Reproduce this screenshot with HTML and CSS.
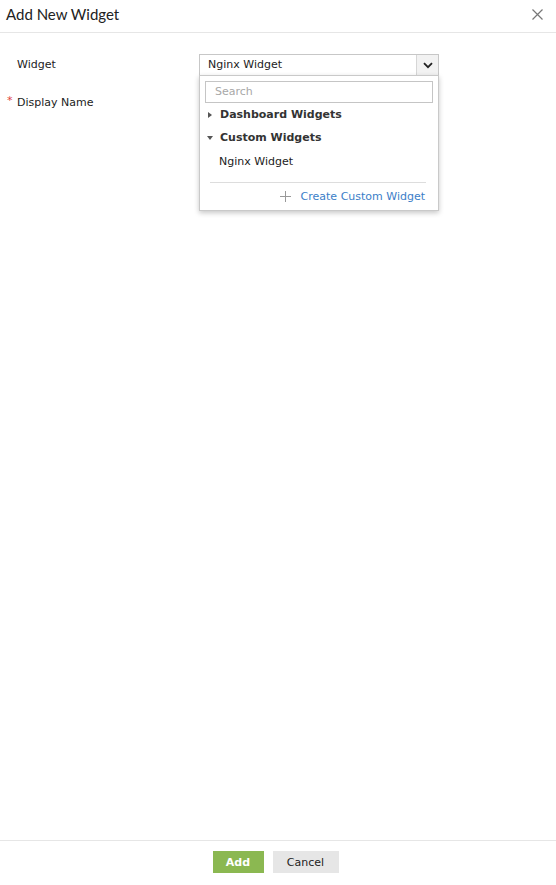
FILE: index.html
```html
<!DOCTYPE html>
<html>
<head>
<meta charset="utf-8">
<link rel="stylesheet" href="styles.css">
</head>
<body>
<div class="dialog">
  <div class="header">
    <div class="title">Add New Widget</div>
    <svg class="close" width="11" height="11" viewBox="0 0 11 11"><path d="M0.5 0.5 L10.5 10.5 M10.5 0.5 L0.5 10.5" stroke="#777" stroke-width="1.2" fill="none"/></svg>
  </div>
  <div class="body">
    <div class="row row-widget">
      <div class="label">Widget</div>
      <div class="field">
        <div class="select">
          <div class="select-text">Nginx Widget</div>
          <div class="select-btn">
            <svg width="10" height="7" viewBox="0 0 10 7"><path d="M1 1.2 L5 5.2 L9 1.2" stroke="#222" stroke-width="1.8" fill="none"/></svg>
          </div>
        </div>
        <div class="menu">
          <div class="search">Search</div>
          <div class="group"><span class="tri-right"></span>Dashboard Widgets</div>
          <div class="group"><span class="tri-down"></span>Custom Widgets</div>
          <div class="item">Nginx Widget</div>
          <div class="sep"></div>
          <div class="create">
            <svg width="11" height="11" viewBox="0 0 11 11"><path d="M5.5 0 V11 M0 5.5 H11" stroke="#999" stroke-width="1" fill="none"/></svg>
            <span>Create Custom Widget</span>
          </div>
        </div>
      </div>
    </div>
    <div class="row row-name">
      <div class="label"><span class="req">*</span>Display Name</div>
    </div>
  </div>
  <div class="footer">
    <button class="btn btn-add">Add</button>
    <button class="btn btn-cancel">Cancel</button>
  </div>
</div>
</body>
</html>
```
FILE: styles.css
```css
* { box-sizing: border-box; }
html, body { margin: 0; padding: 0; background: #fff; }
body {
  font-family: "DejaVu Sans", Verdana, sans-serif;
  font-size: 11px;
  color: #222;
}
.dialog {
  width: 556px;
  height: 885px;
  display: flex;
  flex-direction: column;
}
.header {
  height: 33px;
  border-bottom: 1px solid #e6e6e6;
  display: flex;
  align-items: center;
  justify-content: space-between;
  padding: 0 13px 0 6px;
}
.title {
  font-family: Lato, "Open Sans", sans-serif;
  font-size: 15px;
  color: #222;
  margin-top: -4px;
}
.close { margin-top: -4px; }
.body {
  flex: 1;
  padding-top: 21px;
}
.row {
  display: flex;
  align-items: flex-start;
}
.row-widget { height: 38px; }
.label {
  width: 199px;
  padding-left: 17px;
  line-height: 21px;
  position: relative;
}
.req {
  position: absolute;
  left: 7px;
  top: -2px;
  color: #e0403b;
  font-size: 11px;
}
.field {
  position: relative;
  width: 240px;
}
.select {
  display: flex;
  height: 22px;
  border: 1px solid #c7c7c7;
  background: #fff;
}
.select-text {
  flex: 1;
  padding-left: 8px;
  line-height: 20px;
  color: #222;
}
.select-btn {
  width: 22px;
  background: #f2f2f2;
  border-left: 1px solid #d6d6d6;
  display: flex;
  align-items: center;
  justify-content: center;
}
.menu {
  position: absolute;
  top: 21px;
  left: 0;
  width: 240px;
  height: 136px;
  background: #fff;
  border: 1px solid #c9c9c9;
  box-shadow: 0 2px 5px rgba(0,0,0,0.22);
  padding: 5px 5px 0 5px;
  z-index: 2;
}
.search {
  height: 22px;
  border: 1px solid #c5c5c5;
  padding-left: 9px;
  line-height: 20px;
  color: #a8a8a8;
}
.group {
  display: flex;
  align-items: center;
  font-weight: bold;
  color: #333;
  height: 23px;
  padding-left: 2px;
}
.tri-right {
  width: 0; height: 0;
  border-top: 3.5px solid transparent;
  border-bottom: 3.5px solid transparent;
  border-left: 4px solid #555;
  margin-right: 8px;
  margin-left: 1px;
}
.tri-down {
  width: 0; height: 0;
  border-left: 3.5px solid transparent;
  border-right: 3.5px solid transparent;
  border-top: 4px solid #555;
  margin-right: 7px;
}
.item {
  height: 25px;
  line-height: 26px;
  padding-left: 14px;
  color: #222;
}
.sep {
  height: 1px;
  background: #ddd;
  margin: 8px 7px 0 5px;
}
.create {
  display: flex;
  align-items: center;
  justify-content: flex-end;
  gap: 10px;
  padding-right: 8px;
  height: 26px;
  color: #3b7ec8;
}
.footer {
  height: 45px;
  border-top: 1px solid #e6e6e6;
  display: flex;
  justify-content: center;
  align-items: flex-start;
  padding-top: 10px;
  gap: 9px;
  padding-right: 5px;
}
.btn {
  font-family: "DejaVu Sans", Verdana, sans-serif;
  font-size: 11px;
  height: 22px;
  border: none;
  padding: 0;
}
.btn-add {
  width: 51px;
  background: #8bb851;
  color: #fff;
  font-weight: bold;
}
.btn-cancel {
  width: 66px;
  background: #e6e6e6;
  color: #222;
}
```
